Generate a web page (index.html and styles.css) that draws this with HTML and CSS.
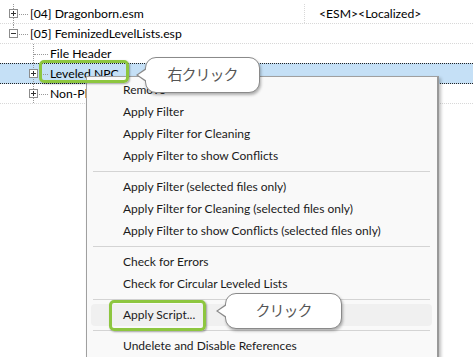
FILE: index.html
```html
<!DOCTYPE html>
<html lang="ja">
<head>
  <meta charset="UTF-8">
  <title>xEdit - Apply Script</title>
  <link rel="stylesheet" href="styles.css">
</head>
<body>
  <div class="screen">
    <div class="tree">
      <div class="row">
        <div class="name-col">
          <span class="gutter g-tee"><span class="box plus"></span></span>
          <span class="label">[04] Dragonborn.esm</span>
        </div>
        <div class="flags-col">&lt;ESM&gt;&lt;Localized&gt;</div>
      </div>
      <div class="row">
        <div class="name-col">
          <span class="gutter g-end"><span class="box minus"></span></span>
          <span class="label">[05] FeminizedLevelLists.esp</span>
        </div>
      </div>
      <div class="row">
        <div class="name-col">
          <span class="gutter"></span>
          <span class="gutter g-tee"></span>
          <span class="label">File Header</span>
        </div>
      </div>
      <div class="row selected">
        <div class="name-col">
          <span class="gutter"></span>
          <span class="gutter g-tee"><span class="box plus"></span></span>
          <span class="label">Leveled NPC</span>
        </div>
      </div>
      <div class="row">
        <div class="name-col">
          <span class="gutter"></span>
          <span class="gutter g-tee"><span class="box plus"></span></span>
          <span class="label">Non-Player Character (Actor)</span>
        </div>
      </div>
    </div>

    <!-- context menu -->
    <div class="menu">
      <div class="item">Remove</div>
      <div class="item">Apply Filter</div>
      <div class="item">Apply Filter for Cleaning</div>
      <div class="item">Apply Filter to show Conflicts</div>
      <div class="sep"></div>
      <div class="item">Apply Filter (selected files only)</div>
      <div class="item">Apply Filter for Cleaning (selected files only)</div>
      <div class="item">Apply Filter to show Conflicts (selected files only)</div>
      <div class="sep"></div>
      <div class="item">Check for Errors</div>
      <div class="item">Check for Circular Leveled Lists</div>
      <div class="sep"></div>
      <div class="item hover">Apply Script...</div>
      <div class="sep"></div>
      <div class="item">Undelete and Disable References</div>
    </div>

    <!-- annotations -->
    <div class="mark mark-npc"></div>
    <div class="mark mark-script"></div>
    <div class="bubble bubble-right">右クリック</div>
    <div class="bubble bubble-click">クリック</div>
  </div>
</body>
</html>
```

FILE: styles.css
```css
body {
  margin: 0;
  background-color: #fff;
  font-family: "Segoe UI", Lato, "Noto Sans", sans-serif;
  color: #000;
}
.screen {
  position: relative;
  width: 473px;
  height: 357px;
  overflow: hidden;
}

/* tree view */
.tree {
  padding-top: 4px;
}
.row {
  display: flex;
  height: 20px;
  box-sizing: border-box;
  border-bottom: 1px dotted #d8d8d8;
  font-size: 12.2px;
}
.row.selected {
  background-color: #c5e0f6;
  border-top: 1px dotted #222;
  border-bottom: 1px dotted #222;
  margin-top: -1px;
  height: 21px;
}
.name-col {
  display: flex;
  align-items: center;
  width: 305px;
  padding-left: 3px;
  box-sizing: border-box;
  height: 100%;
}
.row:first-child .name-col {
  border-right: 1px dotted #d8d8d8;
}
.flags-col {
  display: flex;
  align-items: center;
  padding-left: 14px;
}
.label {
  padding-left: 7px;
  white-space: nowrap;
}
.gutter {
  position: relative;
  flex: none;
  width: 20px;
  height: 100%;
}
.g-tee::before,
.g-end::before {
  content: "";
  position: absolute;
  left: 10px;
  top: 0;
  bottom: 0;
  border-left: 1px dotted #999;
}
.g-end::before {
  bottom: 50%;
}
.g-tee::after,
.g-end::after {
  content: "";
  position: absolute;
  left: 11px;
  right: -5px;
  top: 50%;
  border-top: 1px dotted #999;
}
.selected .g-tee::before {
  top: -1px;
  bottom: -1px;
}
.box {
  position: absolute;
  z-index: 1;
  left: 6px;
  top: 50%;
  margin-top: -5px;
  width: 9px;
  height: 9px;
  box-sizing: border-box;
  border: 1px solid #8c8c8c;
  background-color: #fff;
}
.box::before {
  content: "";
  position: absolute;
  left: 1px;
  top: 3px;
  width: 5px;
  height: 1px;
  background-color: #333;
}
.box.plus::after {
  content: "";
  position: absolute;
  left: 3px;
  top: 1px;
  width: 1px;
  height: 5px;
  background-color: #333;
}

/* context menu */
.menu {
  position: absolute;
  left: 86px;
  top: 76px;
  width: 353px;
  height: 300px;
  box-sizing: border-box;
  padding-top: 2px;
  background-color: #f9f9f9;
  border: 1px solid #a0a0a0;
  border-right: 2px solid #999;
  box-shadow: 2px 2px 3px rgba(0, 0, 0, 0.25);
  font-size: 12px;
  color: #1b1b1b;
}
.item {
  height: 22px;
  line-height: 22px;
  margin: 0 5px 0 4px;
  padding-left: 32px;
  border-radius: 4px;
  white-space: nowrap;
}
.item.hover {
  background-color: #f0f0f0;
}
.sep {
  height: 1px;
  margin: 4px 7px 4px 6px;
  background-color: #d4d4d4;
}

/* annotations */
.mark {
  position: absolute;
  z-index: 3;
  box-sizing: border-box;
  border: 3px solid #8dc63f;
  border-radius: 5px;
  box-shadow: 1px 1px 2px rgba(0, 0, 0, 0.35);
}
.mark-npc {
  left: 39px;
  top: 60px;
  width: 90px;
  height: 23px;
}
.mark-script {
  left: 109px;
  top: 300px;
  width: 97px;
  height: 31px;
}
.bubble {
  position: absolute;
  z-index: 4;
  box-sizing: border-box;
  height: 36px;
  padding-top: 5px;
  background-color: #fff;
  border: 1px solid #8a8a8a;
  border-radius: 11px;
  box-shadow: 1px 2px 3px rgba(0, 0, 0, 0.3);
  font-family: "Noto Sans CJK JP", sans-serif;
  font-size: 15px;
  letter-spacing: -1px;
  color: #555;
  text-align: center;
}
.bubble::before,
.bubble::after {
  content: "";
  position: absolute;
  top: 50%;
  border-style: solid;
  border-color: transparent;
}
.bubble::before {
  left: -10px;
  margin-top: -7px;
  border-width: 7px 10px 7px 0;
  border-right-color: #8a8a8a;
}
.bubble::after {
  left: -8px;
  margin-top: -6px;
  border-width: 6px 9px 6px 0;
  border-right-color: #fff;
}
.bubble-right {
  left: 145px;
  top: 57px;
  width: 115px;
}
.bubble-click {
  left: 225px;
  top: 293px;
  width: 117px;
}
```
